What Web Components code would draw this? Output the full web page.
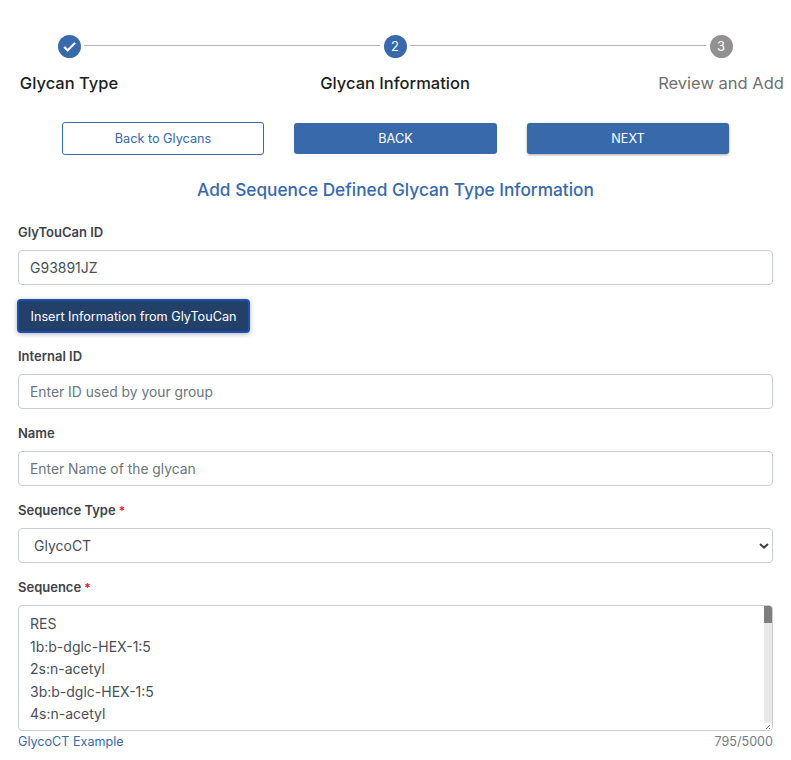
<!DOCTYPE html>
<html lang="en">
<head>
<meta charset="utf-8">
<title>Add Glycan</title>
<style>
    body {
        margin: 0;
        background: #fff;
        font-family: Inter, "Noto Sans", sans-serif;
        color: #4a4f57;
    }
</style>
</head>
<body>
<glycan-page>
    <glycan-stepper>
        <glycan-step state="done" label="Glycan Type"></glycan-step>
        <glycan-step state="active" number="2" label="Glycan Information"></glycan-step>
        <glycan-step state="todo" number="3" label="Review and Add"></glycan-step>
    </glycan-stepper>
    <glycan-actions>
        <glycan-button variant="outline">Back to Glycans</glycan-button>
        <glycan-button>BACK</glycan-button>
        <glycan-button variant="raised">NEXT</glycan-button>
    </glycan-actions>
    <glycan-title>Add Sequence Defined Glycan Type Information</glycan-title>
    <glycan-field label="GlyTouCan ID"><glycan-input value="G93891JZ"></glycan-input></glycan-field>
    <glycan-insert>Insert Information from GlyTouCan</glycan-insert>
    <glycan-field label="Internal ID"><glycan-input placeholder="Enter ID used by your group"></glycan-input></glycan-field>
    <glycan-field label="Name"><glycan-input placeholder="Enter Name of the glycan"></glycan-input></glycan-field>
    <glycan-field label="Sequence Type" required><glycan-select>GlycoCT</glycan-select></glycan-field>
    <glycan-field label="Sequence" required>
        <glycan-sequence count="795/5000" link="GlycoCT Example">RES
1b:b-dglc-HEX-1:5
2s:n-acetyl
3b:b-dglc-HEX-1:5
4s:n-acetyl</glycan-sequence>
    </glycan-field>
</glycan-page>

<script>
const BLUE = '#3869aa';

// small helper so each class stays short
function shadow(el, html) {
    el.attachShadow({ mode: 'open' }).innerHTML = html;
}

class GlycanPage extends HTMLElement {
    constructor() {
        super();
        shadow(this, `
        <style>
            :host { display: block; padding: 35px 18px 0; height: 725px; overflow: hidden; }
        </style>
        <slot></slot>`);
    }
}

class GlycanStepper extends HTMLElement {
    constructor() {
        super();
        shadow(this, `
        <style>
            :host { display: flex; justify-content: space-between; margin: 0 4px 0 3px; }
        </style>
        <slot></slot>`);
    }
}

class GlycanStep extends HTMLElement {
    connectedCallback() {
        const state = this.getAttribute('state');
        const last = !this.nextElementSibling;
        const check = `<svg width="15" height="15" viewBox="0 0 24 24"><path fill="#fff" stroke="#fff" stroke-width="1" d="M9 16.2 4.8 12l-1.9 1.9L9 20 21.5 7.5 19.6 5.6z"/></svg>`;
        shadow(this, `
        <style>
            :host { display: block; width: 96px; position: relative; }
            .top { display: flex; justify-content: center; }
            .dot {
                width: 23px; height: 23px; border-radius: 50%;
                background: ${state === 'todo' ? '#919191' : BLUE};
                color: #fff; font-size: 13px; line-height: 23px; text-align: center;
                display: flex; align-items: center; justify-content: center;
            }
            .line {
                position: absolute; top: 10px; left: 63px; width: 296px; height: 1px;
                background: #b4b4b4;
            }
            .label {
                margin-top: 13px; text-align: center; white-space: nowrap;
                display: flex; justify-content: center;
                font-size: 16.5px; line-height: 24px; letter-spacing: 0;
                font-weight: ${state === 'todo' ? 400 : 500};
                color: ${state === 'todo' ? '#6f6f6f' : '#1d1d1d'};
            }
        </style>
        <div class="top"><div class="dot">${state === 'done' ? check : this.getAttribute('number')}</div></div>
        ${last ? '' : '<div class="line"></div>'}
        <div class="label">${this.getAttribute('label')}</div>`);
    }
}

class GlycanActions extends HTMLElement {
    constructor() {
        super();
        shadow(this, `
        <style>
            :host { display: flex; justify-content: center; align-items: center; gap: 30px; margin-top: 27px; }
        </style>
        <slot></slot>`);
    }
}

class GlycanButton extends HTMLElement {
    connectedCallback() {
        const v = this.getAttribute('variant');
        const outline = v === 'outline';
        shadow(this, `
        <style>
            :host {
                display: block; box-sizing: border-box; width: ${v ? 202 : 203}px;
                height: ${outline ? 33 : 31}px; line-height: 31px;
                text-align: center; font-size: 12.7px; border-radius: 3px;
                background: ${outline ? '#fff' : BLUE};
                color: ${outline ? BLUE : '#fff'};
                border: ${outline ? '1px solid ' + BLUE : 'none'};
                box-shadow: ${v === 'raised' ? '0 1px 3px rgba(0,0,0,.35)' : 'none'};
            }
        </style>
        <slot></slot>`);
    }
}

class GlycanTitle extends HTMLElement {
    constructor() {
        super();
        shadow(this, `
        <style>
            :host {
                display: block; text-align: center; margin: 23px 0 21px;
                font-size: 17.25px; line-height: 24px; font-weight: 500; color: ${BLUE};
            }
        </style>
        <slot></slot>`);
    }
}

class GlycanField extends HTMLElement {
    connectedCallback() {
        const star = this.hasAttribute('required') ? '<span class="req"> *</span>' : '';
        shadow(this, `
        <style>
            :host { display: block; margin-top: 15px; }
            .label {
                font-size: 13px; line-height: 19px; font-weight: 600; color: #3f4349;
                margin-bottom: 8px;
            }
            .req { color: #e02020; font-size: 12px; }
        </style>
        <div class="label">${this.getAttribute('label')}${star}</div>
        <slot></slot>`);
    }
}

const boxCss = `
    display: flex; align-items: center; box-sizing: border-box; height: 35px;
    border: 1px solid #c9ced6; border-radius: 4px; background: #fff;
    font-size: 14px; color: #4a4f57;
`;

class GlycanInput extends HTMLElement {
    connectedCallback() {
        const value = this.getAttribute('value');
        shadow(this, `
        <style>
            :host { ${boxCss} padding: 0 11px; }
            .ph { color: #6e757d; font-size: 13.85px; }
        </style>
        ${value ? `<span>${value}</span>` : `<span class="ph">${this.getAttribute('placeholder')}</span>`}`);
    }
}

class GlycanInsert extends HTMLElement {
    constructor() {
        super();
        shadow(this, `
        <style>
            :host {
                display: block; box-sizing: border-box; width: 233px; height: 34px;
                margin: 14px 0 -1px -1px; line-height: 32px; text-align: center;
                font-size: 12.65px; color: #fff; background: #234069;
                border: 2px solid #1f4fb0; border-radius: 4px;
                box-shadow: 0 1px 5px rgba(0,0,0,.3);
            }
        </style>
        <slot></slot>`);
    }
}

class GlycanSelect extends HTMLElement {
    constructor() {
        super();
        shadow(this, `
        <style>
            :host { ${boxCss} padding: 0 3px 0 15px; justify-content: space-between; }
            svg { display: block; }
        </style>
        <slot></slot>
        <svg width="10" height="6" viewBox="0 0 10 6"><path d="M1 1l4 3.6L9 1" fill="none" stroke="#3c4048" stroke-width="2"/></svg>`);
    }
}

class GlycanSequence extends HTMLElement {
    connectedCallback() {
        shadow(this, `
        <style>
            :host { display: block; }
            .box {
                display: flex; box-sizing: border-box; height: 126px; overflow: hidden;
                border: 1px solid #c9ced6; border-radius: 4px; font-size: 14px; color: #4a4f57;
            }
            .text { flex: 1; padding: 7px 11px; line-height: 22.5px; white-space: pre-line; }
            .bar { width: 8px; background: #e8e8e8; display: flex; flex-direction: column; justify-content: space-between; }
            .thumb { height: 17px; background: #7e7e7e; }
            .grip { height: 7px; background: #fff; color: #555; }
            .grip svg { display: block; }
            .foot {
                display: flex; justify-content: space-between; align-items: center;
                font-size: 12.6px; line-height: 20px; margin-top: 1px;
            }
            .link { color: ${BLUE}; }
            .count { color: #757b83; }
        </style>
        <div class="box">
            <div class="text"><slot></slot></div>
            <div class="bar">
                <div class="thumb"></div>
                <div class="grip"><svg width="8" height="7" viewBox="0 0 8 7"><path d="M2 6l4-4M5 6l1-1" stroke="#555" stroke-width=".8" fill="none"/></svg></div>
            </div>
        </div>
        <div class="foot"><span class="link">${this.getAttribute('link')}</span><span class="count">${this.getAttribute('count')}</span></div>`);
    }
}

customElements.define('glycan-page', GlycanPage);
customElements.define('glycan-stepper', GlycanStepper);
customElements.define('glycan-step', GlycanStep);
customElements.define('glycan-actions', GlycanActions);
customElements.define('glycan-button', GlycanButton);
customElements.define('glycan-title', GlycanTitle);
customElements.define('glycan-field', GlycanField);
customElements.define('glycan-input', GlycanInput);
customElements.define('glycan-insert', GlycanInsert);
customElements.define('glycan-select', GlycanSelect);
customElements.define('glycan-sequence', GlycanSequence);
</script>
</body>
</html>
